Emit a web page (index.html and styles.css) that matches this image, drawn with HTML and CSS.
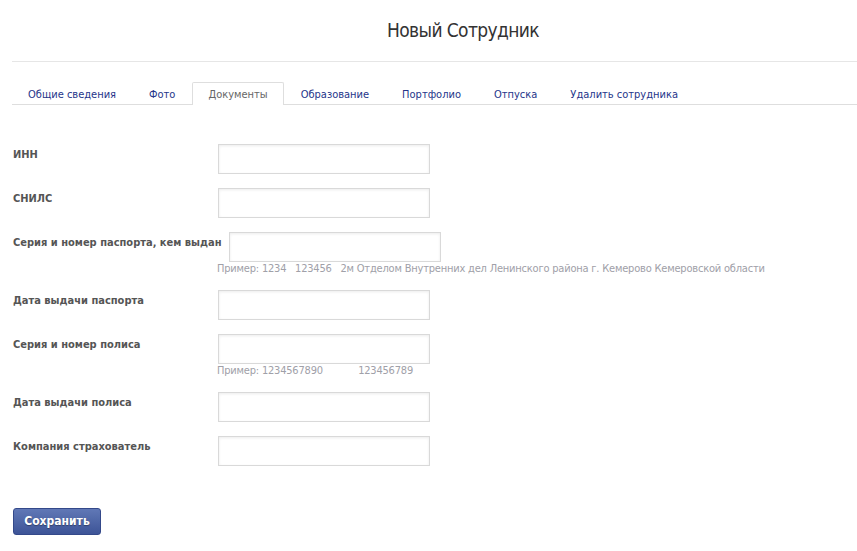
FILE: index.html
```html
<!DOCTYPE html>
<html lang="ru">
<head>
<meta charset="utf-8">
<title>Новый Сотрудник</title>
<link rel="stylesheet" href="styles.css">
</head>
<body>
<div class="page">
  <header class="head">
    <h1 class="title">Новый Сотрудник</h1>
  </header>
  <nav class="tabs">
    <a class="tab">Общие сведения</a>
    <a class="tab">Фото</a>
    <a class="tab active">Документы</a>
    <a class="tab">Образование</a>
    <a class="tab">Портфолио</a>
    <a class="tab">Отпуска</a>
    <a class="tab">Удалить сотрудника</a>
  </nav>
  <form class="form">
    <div class="field">
      <div class="row"><label class="label">ИНН</label><input class="input" type="text"></div>
    </div>
    <div class="field">
      <div class="row"><label class="label">СНИЛС</label><input class="input" type="text"></div>
    </div>
    <div class="field">
      <div class="row"><label class="label">Серия и номер паспорта, кем выдан</label><input class="input" type="text"></div>
      <div class="hint">Пример: 1234   123456   2м Отделом Внутренних дел Ленинского района г. Кемерово Кемеровской области</div>
    </div>
    <div class="field">
      <div class="row"><label class="label">Дата выдачи паспорта</label><input class="input" type="text"></div>
    </div>
    <div class="field">
      <div class="row"><label class="label">Серия и номер полиса</label><input class="input" type="text"></div>
      <div class="hint">Пример: 1234567890            123456789</div>
    </div>
    <div class="field">
      <div class="row"><label class="label">Дата выдачи полиса</label><input class="input" type="text"></div>
    </div>
    <div class="field">
      <div class="row"><label class="label">Компания страхователь</label><input class="input" type="text"></div>
    </div>
    <div class="actions">
      <button class="btn" type="button">Сохранить</button>
    </div>
  </form>
</div>
</body>
</html>
```
FILE: styles.css
```css
html, body {
  margin: 0;
  padding: 0;
  background: #fff;
}
body {
  font-family: "DejaVu Sans Condensed", "DejaVu Sans", sans-serif;
  font-size: 11px;
  color: #333;
}
.page {
  padding-left: 12px;
}
.head {
  height: 62px;
  border-bottom: 1px solid #e6e6e6;
  box-sizing: border-box;
  padding-left: 57px;
}
.title {
  margin: 0;
  padding-top: 18px;
  text-align: center;
  font-family: "DejaVu Sans Condensed", sans-serif;
  font-weight: normal;
  font-size: 19px;
  letter-spacing: -0.6px;
  line-height: 24px;
  color: #333;
}
.tabs {
  display: flex;
  margin-top: 20px;
  border-bottom: 1px solid #dedede;
  height: 22px;
}
.tab {
  display: block;
  padding: 1px 15px 0;
  margin-right: 1px;
  line-height: 22px;
  height: 22px;
  color: #25358a;
  border: 1px solid transparent;
  border-bottom: none;
  box-sizing: border-box;
  white-space: nowrap;
}
.tab.active {
  color: #666;
  border-color: #dedede;
  border-radius: 2px 2px 0 0;
  background: #fff;
  height: 23px;
}
.form {
  margin: 0;
  padding: 39px 0 0 1px;
}
.field {
  margin-bottom: 14px;
}
.row {
  display: flex;
  align-items: flex-start;
  gap: 7px;
}
.label {
  min-width: 198px;
  padding-top: 4px;
  line-height: 14px;
  font-weight: bold;
  color: #555;
  white-space: nowrap;
}
.input {
  width: 212px;
  height: 30px;
  box-sizing: border-box;
  margin: 0;
  border: 1px solid #d9d9d9;
  background: #fff;
  box-shadow: inset 0 1px 3px rgba(0, 0, 0, 0.08);
  outline: none;
}
.hint {
  padding-left: 204px;
  line-height: 14px;
  color: #a0a0a8;
  letter-spacing: -0.2px;
  white-space: pre;
}
.actions {
  padding-top: 28px;
}
.btn {
  width: 88px;
  height: 27px;
  border: 1px solid #34498a;
  border-radius: 3px;
  background: linear-gradient(#6078b6, #3d5497);
  color: #fff;
  font-family: "DejaVu Sans Condensed", "DejaVu Sans", sans-serif;
  font-weight: bold;
  font-size: 12px;
  text-shadow: 0 1px 1px rgba(0, 0, 0, 0.35);
  padding: 0 0 1px;
  cursor: pointer;
}
```
